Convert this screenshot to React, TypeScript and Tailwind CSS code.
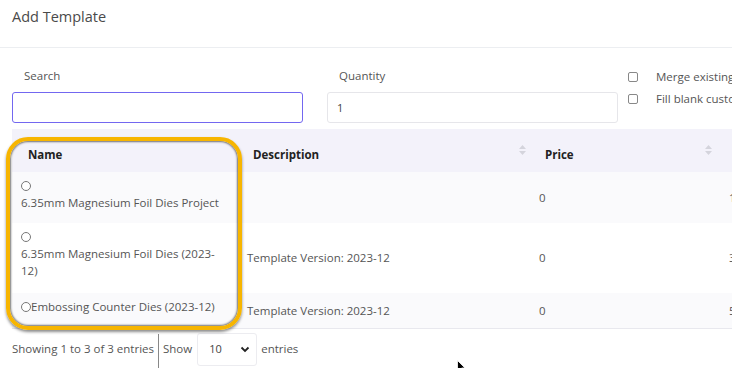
import React from "react";

function SortArrows() {
  return (
    <svg width="7" height="10" viewBox="0 0 7 10" className="block">
      <path d="M3.5 0 L7 4 L0 4 Z" fill="#d4d4dc" />
      <path d="M3.5 10 L7 6 L0 6 Z" fill="#d4d4dc" />
    </svg>
  );
}

function Radio() {
  return (
    <span className="inline-block w-[10px] h-[10px] rounded-full border border-[#777] bg-white align-[-1px]" />
  );
}

export default function App() {
  const font = { fontFamily: '"Open Sans", "Liberation Sans", sans-serif' };
  return (
    <div className="relative w-[732px] h-[368px] overflow-hidden bg-white text-[#555]" style={font}>
      <div className="h-[48px] border-b border-[#eceef1] pl-[12px] pt-[7px] text-[14.5px] text-[#4a4a4a] leading-[20px]">
        Add Template
      </div>
      <div className="flex pt-[20px] pl-[12px] w-[900px]">
        <div className="w-[291px] shrink-0 flex flex-col">
          <div className="pl-[12px] text-[11.5px] leading-[16px] h-[24px]">Search</div>
          <div className="h-[31px] border border-[#7367f0] rounded-[3px]" />
        </div>
        <div className="w-[291px] shrink-0 ml-[24px] flex flex-col">
          <div className="pl-[12px] text-[11.5px] leading-[16px] h-[24px]">Quantity</div>
          <div className="h-[31px] border border-[#e6e6ea] rounded-[3px] pl-[9px] text-[11px] leading-[29px] text-[#444]">1</div>
        </div>
        <div className="ml-[10px] mt-[3px] shrink-0 flex flex-col gap-[10px] text-[11.5px] leading-[12px] whitespace-nowrap">
          <div className="flex items-center">
            <span className="w-[10px] h-[10px] border border-[#888] rounded-[2px]" />
            <span className="ml-[18px]">Merge existing items</span>
          </div>
          <div className="flex items-center">
            <span className="w-[10px] h-[10px] border border-[#888] rounded-[2px]" />
            <span className="ml-[18px]">Fill blank customer fields</span>
          </div>
        </div>
      </div>
      <div className="mt-[6px] ml-[12px] w-[760px]">
        <table className="border-collapse table-fixed w-[760px] text-[11.5px] text-[#555]">
          <colgroup>
            <col className="w-[225px]" />
            <col className="w-[292px]" />
            <col className="w-[190px]" />
            <col className="w-[53px]" />
          </colgroup>
          <thead>
            <tr className="h-[43px] bg-[#f3f2fa]">
              <th className="text-left font-bold text-[#222] pl-[16px] pt-[9px]">Name</th>
              <th className="text-left font-bold text-[#222] pl-[16px] pt-[9px]">
                <div className="flex items-center justify-between pr-[3px]">
                  <span>Description</span>
                  <span className="-mt-[10px]"><SortArrows /></span>
                </div>
              </th>
              <th className="text-left font-bold text-[#222] pl-[16px] pt-[9px]">
                <div className="flex items-center justify-between pr-[7px]">
                  <span>Price</span>
                  <span className="-mt-[10px]"><SortArrows /></span>
                </div>
              </th>
              <th />
            </tr>
          </thead>
          <tbody>
            <tr className="h-[51px] bg-[#fafafc]">
              <td className="align-top pt-[5px] pl-[9px] leading-[17px]">
                <Radio />
                <br />
                6.35mm Magnesium Foil Dies Project
              </td>
              <td className="pl-[10px]" />
              <td className="pl-[10px]">0</td>
              <td className="pl-[10px]">12</td>
            </tr>
            <tr className="h-[70px] bg-white">
              <td className="align-top pt-[5px] pl-[9px] leading-[17px]">
                <Radio />
                <br />
                6.35mm Magnesium Foil Dies (2023-
                <br />
                12)
              </td>
              <td className="pl-[10px]">Template Version: 2023-12</td>
              <td className="pl-[10px]">0</td>
              <td className="pl-[10px]">3</td>
            </tr>
            <tr className="h-[35px] bg-[#fafafc] border-b border-[#e8e8ee]">
              <td className="align-top pt-[5px] pl-[9px] leading-[17px] whitespace-nowrap">
                <Radio />
                Embossing Counter Dies (2023-12)
              </td>
              <td className="pl-[10px]">Template Version: 2023-12</td>
              <td className="pl-[10px]">0</td>
              <td className="pl-[10px]">5</td>
            </tr>
          </tbody>
        </table>
      </div>
      <div className="flex items-center pl-[12px] mt-[5px] h-[35px] text-[11.5px]">
        <span className="-mt-[4px]">Showing 1 to 3 of 3 entries</span>
        <span className="ml-[4px] w-px h-[35px] bg-[#888]" />
        <span className="ml-[4px] -mt-[4px]">Show</span>
        <div className="ml-[5px] -mt-[4px] w-[60px] h-[33px] border border-[#ececf0] rounded-[3px] flex items-center justify-between pl-[11px] pr-[6px] text-[11px] text-[#444]">
          <span>10</span>
          <svg width="10" height="10" viewBox="0 0 10 10">
            <path d="M1.5 3.5 L5 7 L8.5 3.5" fill="none" stroke="#222" strokeWidth="1.8" />
          </svg>
        </div>
        <span className="ml-[4px] -mt-[4px]">entries</span>
      </div>
      <div className="absolute left-[6px] top-[137px] w-[236px] h-[193px] rounded-[22px] border-[4px] border-[#f7b500] shadow-[inset_0_0_2px_1px_rgba(0,0,0,0.55),0_2px_3px_rgba(0,0,0,0.45)] pointer-events-none" />
      <svg className="absolute left-[457px] top-[360px]" width="10" height="14" viewBox="0 0 10 14">
        <path d="M0.5 0.5 L0.5 11 L3 8.5 L5 13 L6.5 12.3 L4.6 8 L8 8 Z" fill="#000" stroke="#fff" strokeWidth="0.8" />
      </svg>
    </div>
  );
}
